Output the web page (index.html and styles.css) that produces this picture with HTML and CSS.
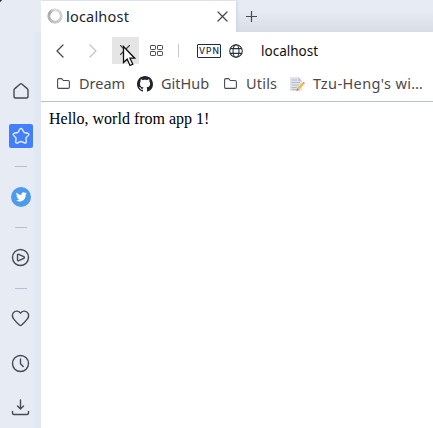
FILE: index.html
```html
<!DOCTYPE html>
<html lang="en">
<head>
<meta charset="utf-8">
<title>localhost</title>
<link rel="stylesheet" href="styles.css">
</head>
<body>
<div class="browser">
  <aside class="sidebar">
    <svg class="side-icon" viewBox="0 0 24 24"><path d="M5 11.2Q5 10.2 5.8 9.6L10.9 5.2Q12 4.4 13.1 5.2L18.2 9.6Q19 10.2 19 11.2V17.2Q19 19 17.2 19H6.8Q5 19 5 17.2Z"/></svg>
    <svg class="side-icon active" viewBox="0 0 24 24"><path d="M11 4.9Q12 3.8 13 4.9L15.1 8.5L18.9 9.3Q20.4 9.8 19.5 11.1L16.9 14.1L17.3 18Q17.2 19.5 15.7 19L12 17.4L8.3 19Q6.8 19.5 6.7 18L7.1 14.1L4.5 11.1Q3.6 9.8 5.1 9.3L8.9 8.5Z"/></svg>
    <hr class="rule">
    <svg class="side-icon twitter" viewBox="0 0 24 24"><circle cx="12" cy="12" r="10"/><path d="M17.8 8.3l-1.2.4c.5-.3.8-.7.9-1.2l-1.4.5c-1.4-1.5-4.1-.4-3.7 2-1.9-.1-3.6-1-4.7-2.4-.7 1.1-.3 2.4.7 3.1l-1-.3c0 1.2.8 2.1 1.9 2.4l-1 .1c.3.9 1.1 1.5 2.1 1.5-1 .8-2.2 1.2-3.5 1 4.6 2.8 10-.1 9.8-5.7.5-.4.8-.8 1.1-1.4z"/></svg>
    <hr class="rule">
    <svg class="side-icon" viewBox="0 0 24 24"><circle cx="11.5" cy="11.5" r="8"/><path d="M8.5 9.1Q8.5 7.9 9.7 8.4L14.8 10.7Q16 11.5 14.8 12.3L9.7 14.6Q8.5 15.1 8.5 13.9Z"/></svg>
    <hr class="rule">
    <svg class="side-icon" viewBox="0 0 24 24"><path d="M11.5 6.2C9.9 3.5 6.2 3.5 4.5 5.6C2.8 7.7 3.3 10.3 5 12.4Q7.1 15.1 10.4 18Q11.5 18.9 12.6 18Q15.9 15.1 18 12.4C19.7 10.3 20.2 7.7 18.5 5.6C16.8 3.5 13.1 3.5 11.5 6.2Z"/></svg>
    <svg class="side-icon clock" viewBox="0 0 24 24"><circle cx="11.5" cy="11.5" r="8"/><path d="M11.5 7V11.7L14.2 14.4"/></svg>
    <svg class="side-icon download" viewBox="0 0 24 24"><path d="M11.5 4V12.8M8.5 10L11.5 12.9L14.5 10M3.5 15.5V17Q3.5 18.5 5 18.5H18Q19.5 18.5 19.5 17V15.5"/></svg>
  </aside>
  <main class="main">
    <div class="tabs">
      <div class="tab">
        <span class="spinner"></span>
        <span class="tab-title">localhost</span>
        <svg class="tab-close" viewBox="0 0 11 11"><path d="M1 1L10 10M10 1L1 10"/></svg>
      </div>
      <svg class="new-tab" viewBox="0 0 11 11"><path d="M5.5 0V11M0 5.5H11"/></svg>
    </div>
    <div class="toolbar">
      <svg class="arrow" viewBox="0 0 8 14"><path d="M7 1L1 7L7 13"/></svg>
      <svg class="arrow forward" viewBox="0 0 8 14"><path d="M1 1L7 7L1 13"/></svg>
      <div class="stop">
        <svg class="stop-icon" viewBox="0 0 10 10"><path d="M.5 .5L9.5 9.5M9.5 .5L.5 9.5"/></svg>
        <svg class="cursor" viewBox="0 0 14 22"><path d="M1.5 1.5V17.5L5.2 14.2L8 20.5L10.8 19.2L8 13.2H12.7Z"/></svg>
      </div>
      <svg class="dial" viewBox="0 0 14 12"><rect x=".5" y=".5" width="5" height="4" rx=".7"/><rect x="7.5" y=".5" width="5" height="4" rx=".7"/><rect x=".5" y="6.5" width="5" height="4" rx=".7"/><rect x="7.5" y="6.5" width="5" height="4" rx=".7"/></svg>
      <span class="divider"></span>
      <span class="vpn">VPN</span>
      <svg class="globe" viewBox="0 0 14 14"><circle cx="7" cy="7" r="6.3"/><ellipse cx="7" cy="7" rx="3" ry="6.3"/><path d="M1.3 4.6H12.7M1.3 9.4H12.7"/></svg>
      <span class="address">localhost</span>
    </div>
    <div class="bookmarks">
      <svg class="folder" viewBox="0 0 13 11"><path d="M.6 9V2Q.6 .6 2 .6H4.6L6.3 2.5H11Q12.4 2.5 12.4 4V9Q12.4 10.4 11 10.4H2Q.6 10.4 .6 9Z"/></svg>
      <span class="label dream">Dream</span>
      <svg class="github" viewBox="0 0 16 16"><path d="M8 0C3.58 0 0 3.58 0 8c0 3.54 2.29 6.53 5.47 7.59.4.07.55-.17.55-.38 0-.19-.01-.82-.01-1.49-2.01.37-2.53-.49-2.69-.94-.09-.23-.48-.94-.82-1.13-.28-.15-.68-.52-.01-.53.63-.01 1.08.58 1.23.82.72 1.21 1.87.87 2.33.66.07-.52.28-.87.51-1.07-1.78-.2-3.64-.89-3.64-3.95 0-.87.31-1.59.82-2.15-.08-.2-.36-1.02.08-2.12 0 0 .67-.21 2.2.82.64-.18 1.32-.27 2-.27s1.36.09 2 .27c1.53-1.04 2.2-.82 2.2-.82.44 1.1.16 1.92.08 2.12.51.56.82 1.27.82 2.15 0 3.07-1.87 3.75-3.65 3.95.29.25.54.73.54 1.48 0 1.07-.01 1.93-.01 2.2 0 .21.15.46.55.38A8 8 0 0 0 16 8c0-4.42-3.58-8-8-8z"/></svg>
      <span class="label git">GitHub</span>
      <svg class="folder" viewBox="0 0 13 11"><path d="M.6 9V2Q.6 .6 2 .6H4.6L6.3 2.5H11Q12.4 2.5 12.4 4V9Q12.4 10.4 11 10.4H2Q.6 10.4 .6 9Z"/></svg>
      <span class="label utils">Utils</span>
      <svg class="memo" viewBox="0 0 16 16"><path fill="#e0e4e9" d="M1 1H9L13 4V15H1Z"/><path fill="#c3c9d0" d="M9 1V5H13Z"/><path stroke="#b4bec8" d="M2.5 4H8M2.5 6.5H11M2.5 9H10M2.5 11.5H8M2.5 13.5H7"/><path stroke="#f6b83c" stroke-width="2.2" d="M14.2 7.5L8.8 13.2"/><path stroke="#e77d86" stroke-width="2.2" d="M15.2 6.5L14.2 7.5"/><path fill="#77624a" d="M8 12.4L9.6 14L7.3 14.7Z"/></svg>
      <span class="label wiki">Tzu-Heng's wi…</span>
    </div>
    <div class="page">Hello, world from app 1!</div>
  </main>
</div>
</body>
</html>
```
FILE: styles.css
```css
* { box-sizing: border-box; }
body { margin: 0; background: #e7ebf4; overflow: hidden; font-family: "Noto Sans", "Open Sans", sans-serif; }
svg { display: block; flex: none; fill: none; stroke: #454a55; stroke-width: 1.2; stroke-linecap: round; stroke-linejoin: round; }
.browser { display: grid; grid-template-columns: 41px 392px; height: 428px; background: radial-gradient(circle at 4px 4px, transparent 4px, #1c1f26 4.5px) 0 0 / 4px 4px no-repeat; }
.sidebar { display: flex; flex-direction: column; align-items: flex-start; padding: 79px 0 0 9px; background: linear-gradient(90deg, transparent 30px, #dfe6f2 41px) 0 32px no-repeat; }
.side-icon { width: 24px; height: 24px; stroke-width: 1.4; }
.active { margin-top: 21px; background: #437ffb; border-radius: 2px; stroke: #e4edff; }
.rule { width: 12px; height: 1px; margin: 18px 0 18px 6px; border: 0; background: #b6bfce; }
.twitter { stroke: none; fill: #fff; }
.twitter circle { fill: #4c9bed; }
.clock { margin-top: 21px; }
.download { margin-top: 20px; }
.main { display: grid; grid-template-rows: 32px 37px 33px 1fr; background: #fff; min-width: 0; }
.tabs { display: flex; align-items: center; overflow: hidden; background: linear-gradient(#e7ebf4 30%, #d7dde7); }
.tab { display: flex; align-items: center; width: 195px; height: 31px; align-self: flex-end; padding-left: 6px; background: #fff; box-shadow: 1px 0 3px #c9d2e4; }
.spinner { width: 16px; height: 16px; margin-top: -1px; border-radius: 50%; background: conic-gradient(#dedede, #c4c4c4 50%, #a8a8a8 85%, #c4c4c4 92%, #dedede); -webkit-mask: radial-gradient(circle closest-side, transparent 4.3px, #000 5px, #000 7.3px, transparent 8px); mask: radial-gradient(circle closest-side, transparent 4.3px, #000 5px, #000 7.3px, transparent 8px); }
.tab-title { width: 150px; margin: -2px 0 0 3px; font-size: 14.5px; line-height: 20px; letter-spacing: .2px; color: #20242b; white-space: nowrap; }
.tab-close { width: 11px; height: 11px; margin-left: 1px; stroke-width: 1.3; }
.new-tab { width: 11px; height: 11px; margin-left: 10px; stroke-width: 1.2; stroke-linecap: butt; }
.toolbar { display: flex; align-items: center; padding-left: 15px; }
.arrow { width: 8px; height: 14px; stroke-width: 1.3; }
.forward { margin-left: 25px; stroke: #c5c5c5; }
.stop { position: relative; width: 27px; height: 27px; margin-left: 15px; padding: 8px; background: #e5e5e5; }
.stop-icon { width: 10px; height: 10px; }
.cursor { position: absolute; left: 10px; top: 8px; width: 14px; height: 22px; fill: #fff; stroke: #111; stroke-width: 1.3; stroke-linejoin: miter; }
.dial { width: 14px; height: 12px; margin-left: 11px; stroke-width: 1; }
.divider { width: 1px; height: 13px; margin-left: 14px; background: #c8c8c8; }
.vpn { width: 24px; height: 14px; margin-left: 18px; border: 1px solid #202c3d; border-radius: 1px; color: #202c3d; font: 500 8.5px/12px Inter, sans-serif; letter-spacing: 1px; text-align: center; padding-left: 1px; }
.globe { width: 14px; height: 14px; margin-left: 8px; stroke: #27303d; stroke-width: 1.1; }
.address { margin-left: 18px; font-size: 13.5px; line-height: 20px; color: #111; }
.bookmarks { display: flex; align-items: center; padding: 0 0 3px 16px; border-bottom: 1px solid #b4c0cc; white-space: nowrap; }
.folder { width: 13px; height: 11px; stroke-width: 1.1; }
.label { margin: -2px 0 0 9px; font-size: 14.5px; line-height: 20px; color: #4a4a4a; }
.dream { width: 58px; }
.github { width: 16px; height: 16px; fill: #20252c; stroke: none; }
.git { margin-left: 8px; width: 63px; }
.utils { width: 43px; margin-left: 9px; letter-spacing: .2px; }
.memo { width: 16px; height: 16px; stroke-width: 1; stroke: none; stroke-linecap: butt; }
.wiki { margin-left: 8px; letter-spacing: .38px; }
.page { padding: 8px; font: 16px/18px "Liberation Serif", serif; color: #000; }
```
